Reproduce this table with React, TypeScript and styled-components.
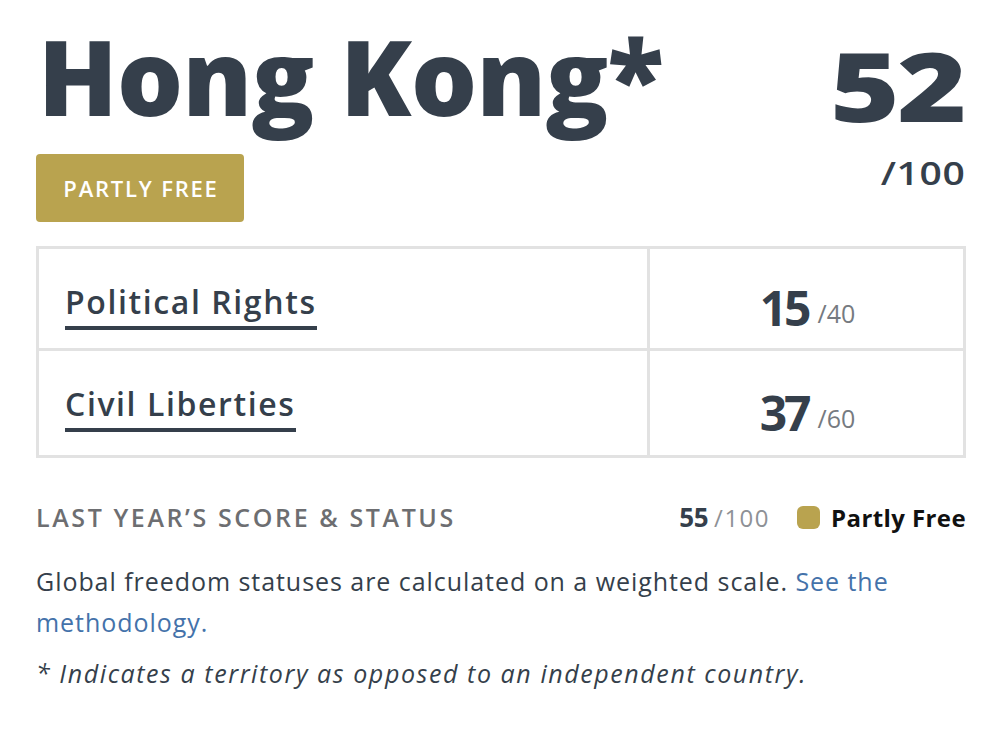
import React from "react";
import styled, { createGlobalStyle } from "styled-components";

const Global = createGlobalStyle`
  html, body { margin: 0; padding: 0; background: #fff; }
  body { font-family: "Open Sans", "Liberation Sans", sans-serif; color: #353f4b; }
`;

const Page = styled.div`
  width: 930px;
  padding: 12px 0 0 36px;
`;

const Header = styled.div`
  display: flex;
  justify-content: space-between;
  align-items: flex-start;
`;

const TitleBlock = styled.div`
  display: flex;
  flex-direction: column;
  align-items: flex-start;
`;

const Title = styled.h1`
  margin: 0 0 0 2px;
  font-family: "Open Sans", sans-serif;
  font-weight: 800;
  font-size: 104px;
  line-height: 128px;
  letter-spacing: -0.7px;
  color: #353f4b;
`;

const Badge = styled.div`
  margin-top: 14px;
  width: 208px;
  height: 68px;
  border-radius: 4px;
  background: #b9a34f;
  color: #fff;
  display: flex;
  align-items: center;
  justify-content: center;
  font-family: "Open Sans", sans-serif;
  font-weight: 600;
  font-size: 22px;
  letter-spacing: 1.8px;
  padding-left: 2px;
  box-sizing: border-box;
`;

const Total = styled.div`
  display: flex;
  flex-direction: column;
  align-items: flex-end;
  padding-top: 21px;
`;

const BigScore = styled.div`
  font-family: "Open Sans", sans-serif;
  font-weight: 800;
  font-size: 96px;
  line-height: 104px;
  letter-spacing: -2px;
  margin-right: 2px;
  color: #353f4b;
  transform: scaleX(1.24);
  transform-origin: right center;
`;

const OutOf = styled.div`
  margin-top: 20px;
  margin-right: 1px;
  font-family: "Open Sans", sans-serif;
  font-weight: 600;
  font-size: 32px;
  line-height: 32px;
  letter-spacing: 0.5px;
  color: #353f4b;
  transform: scaleX(1.22);
  transform-origin: right center;
`;

const Table = styled.div`
  margin-top: 24px;
  display: grid;
  grid-template-columns: 608px 1fr;
  border: 3px solid #e2e2e2;
`;

const Cell = styled.div<{ $right?: boolean; $bottom?: boolean }>`
  height: ${(p) => (p.$bottom ? 107 : 99)}px;
  box-sizing: border-box;
  display: flex;
  align-items: ${(p) => (p.$right ? "center" : "flex-start")};
  justify-content: ${(p) => (p.$right ? "center" : "flex-start")};
  padding: ${(p) => (p.$right ? "20px 0 0 0" : "34px 0 0 26px")};
  border-left: ${(p) => (p.$right ? "3px solid #e2e2e2" : "none")};
  border-top: ${(p) => (p.$bottom ? "3px solid #e2e2e2" : "none")};
`;

const CategoryLink = styled.a`
  display: inline-block;
  font-family: "Open Sans", sans-serif;
  font-weight: 600;
  font-size: 32px;
  line-height: 38px;
  letter-spacing: 1.6px;
  color: #353f4b;
  text-decoration: none;
  border-bottom: 4px solid #353f4b;
  padding-bottom: 5px;
`;

const ScoreGroup = styled.div`
  display: flex;
  align-items: baseline;
  padding-left: 2px;
`;

const Score = styled.span`
  font-family: "Open Sans", sans-serif;
  font-weight: 700;
  font-size: 48px;
  line-height: 48px;
  color: #353f4b;
  letter-spacing: -3px;
`;

const Max = styled.span`
  font-family: "Open Sans", sans-serif;
  font-weight: 400;
  font-size: 25px;
  color: #767a80;
  margin-left: 9px;
  position: relative;
  top: -3px;
`;

const LastYear = styled.div`
  margin-top: 42px;
  height: 34px;
  display: flex;
  align-items: center;
  justify-content: space-between;
`;

const LastLabel = styled.div`
  font-family: "Open Sans", sans-serif;
  font-weight: 600;
  font-size: 25px;
  line-height: 34px;
  color: #6d6e71;
  letter-spacing: 2.6px;
`;

const LastRight = styled.div`
  display: flex;
  align-items: center;
`;

const SmallScore = styled.span`
  font-family: "Open Sans", sans-serif;
  font-weight: 700;
  font-size: 26px;
  letter-spacing: -0.5px;
  color: #353f4b;
`;

const SmallMax = styled.span`
  font-family: "Open Sans", sans-serif;
  font-weight: 400;
  font-size: 24px;
  letter-spacing: 1.5px;
  color: #8e9196;
  margin-left: 6px;
`;

const Dot = styled.span`
  width: 23px;
  height: 23px;
  border-radius: 6px;
  background: #b9a34f;
  margin: 0 11px 0 27px;
`;

const StatusText = styled.span`
  font-family: "Open Sans", sans-serif;
  font-weight: 700;
  font-size: 24px;
  letter-spacing: 0.4px;
  color: #111;
`;

const Para = styled.p<{ $italic?: boolean }>`
  margin: ${(p) => (p.$italic ? "10px" : "27px")} 0 0 0;
  font-family: "Open Sans", sans-serif;
  font-weight: 400;
  font-size: 25px;
  line-height: 41px;
  color: #353f4b;
  font-style: ${(p) => (p.$italic ? "italic" : "normal")};
  letter-spacing: ${(p) => (p.$italic ? "1.58px" : "0.95px")};
`;

const Link = styled.a`
  color: #4472aa;
  text-decoration: none;
`;

export default function App() {
  return (
    <>
      <Global />
      <Page>
        <Header>
          <TitleBlock>
            <Title>Hong Kong*</Title>
            <Badge>PARTLY FREE</Badge>
          </TitleBlock>
          <Total>
            <BigScore>52</BigScore>
            <OutOf>/100</OutOf>
          </Total>
        </Header>
        <Table>
          <Cell>
            <CategoryLink href="#">Political Rights</CategoryLink>
          </Cell>
          <Cell $right>
            <ScoreGroup>
              <Score>15</Score>
              <Max>/40</Max>
            </ScoreGroup>
          </Cell>
          <Cell $bottom>
            <CategoryLink href="#">Civil Liberties</CategoryLink>
          </Cell>
          <Cell $right $bottom>
            <ScoreGroup>
              <Score>37</Score>
              <Max>/60</Max>
            </ScoreGroup>
          </Cell>
        </Table>
        <LastYear>
          <LastLabel>LAST YEAR’S SCORE &amp; STATUS</LastLabel>
          <LastRight>
            <SmallScore>55</SmallScore>
            <SmallMax>/100</SmallMax>
            <Dot />
            <StatusText>Partly Free</StatusText>
          </LastRight>
        </LastYear>
        <Para>
          Global freedom statuses are calculated on a weighted scale.{" "}
          <Link href="#">See the methodology.</Link>
        </Para>
        <Para $italic>* Indicates a territory as opposed to an independent country.</Para>
      </Page>
    </>
  );
}
